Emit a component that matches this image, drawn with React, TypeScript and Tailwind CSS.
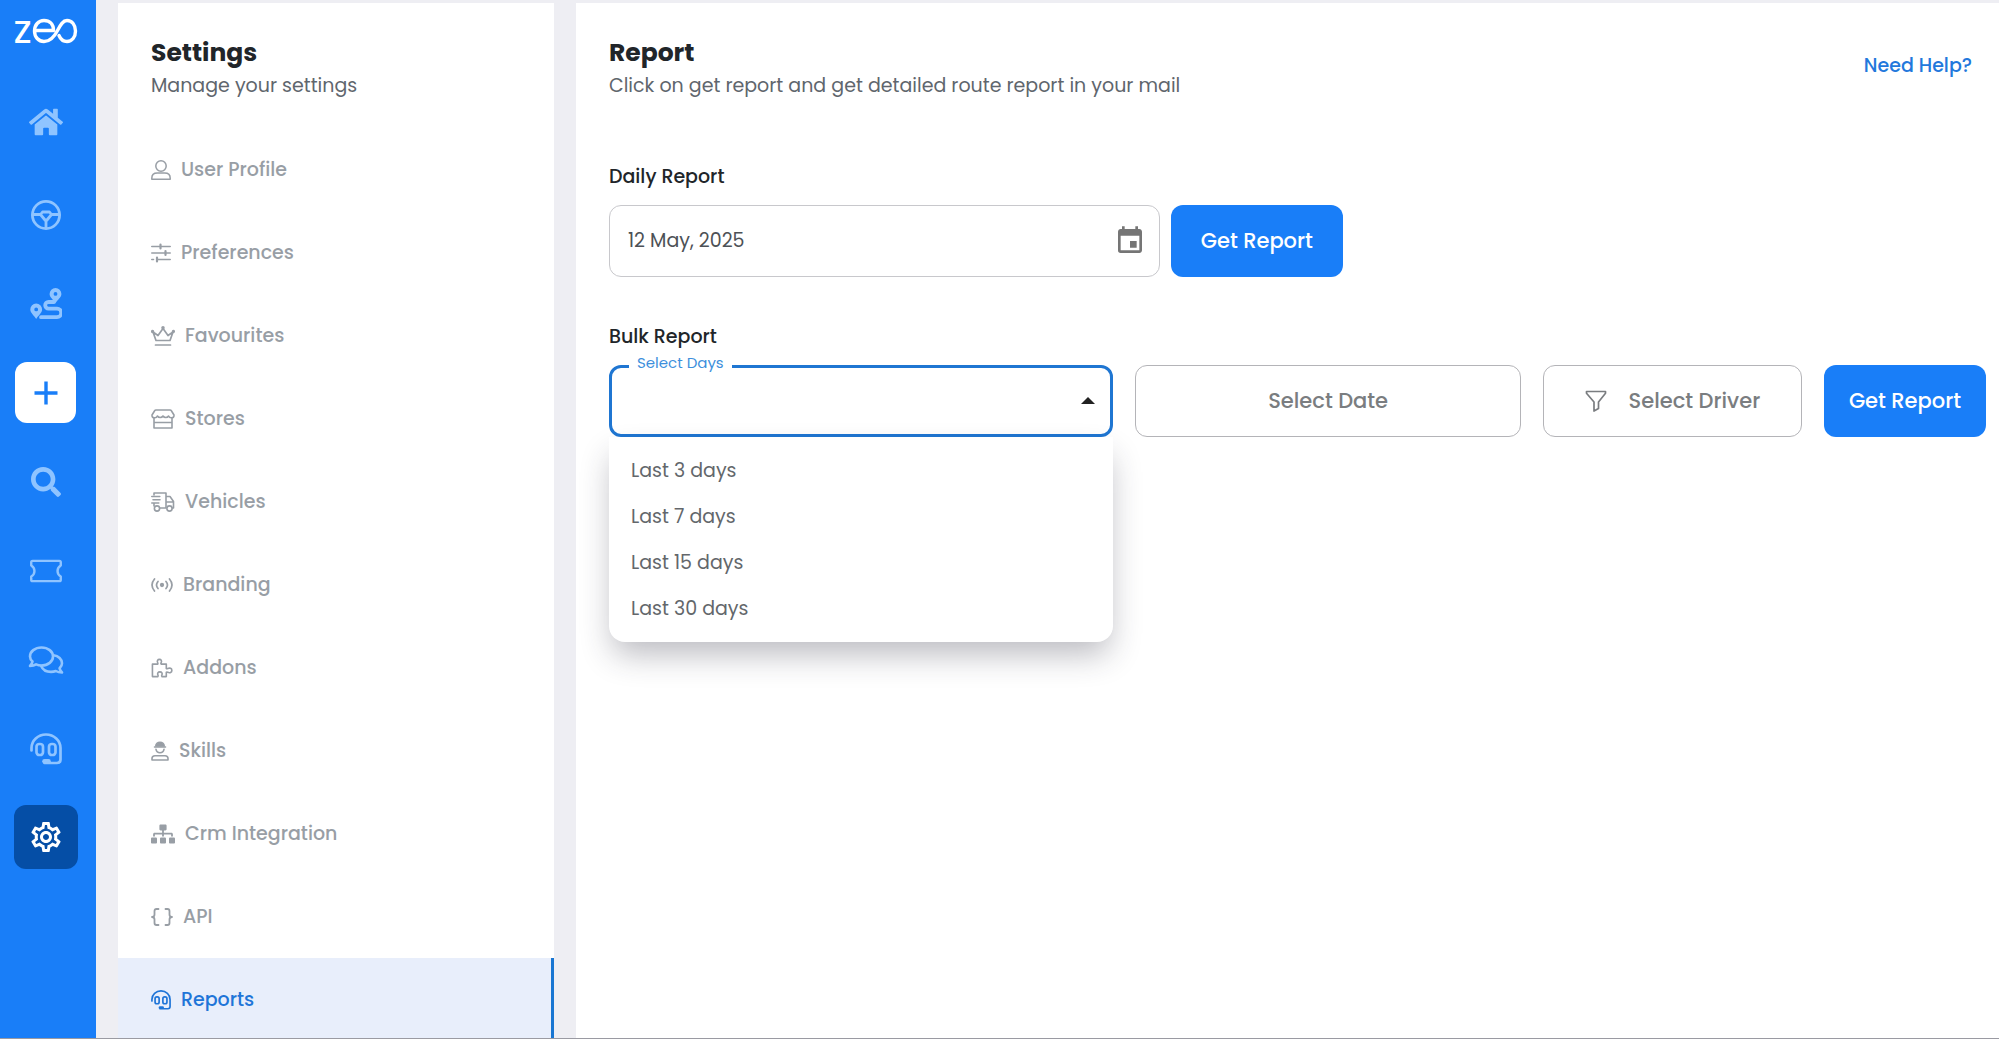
import React from "react";
import { FaHome, FaSearch, FaSitemap } from "react-icons/fa";
import { MdEvent, MdOutlineSettings } from "react-icons/md";

interface IconProps {
  className?: string;
}

const stroke = {
  fill: "none",
  stroke: "currentColor",
  strokeLinecap: "round" as const,
  strokeLinejoin: "round" as const,
};

const WheelIcon = ({ className }: IconProps) => (
  <svg viewBox="0 0 32 32" className={className} {...stroke} strokeWidth="2.8">
    <circle cx="16" cy="16" r="13.6" />
    <path d="M3 15.500h7.500M21.500 15.500H29M16 22v7M12.500 13h7l2 2.500-4.500 5.500h-2l-4.500-5.500z" />
  </svg>
);

const RouteIcon = ({ className }: IconProps) => (
  <svg viewBox="0 0 32 32" className={className}>
    <path
      d="M24 14h-5.500a3.300 3.300 0 0 0 0 6.600h8.500a4.200 4.200 0 0 1 0 8.600H11"
      {...stroke}
      strokeWidth="3.8"
    />
    <path
      fill="currentColor"
      fillRule="evenodd"
      d="M25.500 0a5.900 5.900 0 0 1 5.900 5.900c0 3.300-3.900 6-5.900 9-2-3-5.900-5.700-5.900-9A5.900 5.900 0 0 1 25.500 0zm0 4a1.900 1.900 0 1 0 0 3.800 1.900 1.900 0 0 0 0-3.800zM6.200 15.500a5.900 5.900 0 0 1 5.900 5.900C12.100 24.700 8.200 27.500 6.200 31c-2-3.500-5.900-6.300-5.900-9.600a5.900 5.900 0 0 1 5.900-5.900zm0 4a1.900 1.900 0 1 0 0 3.800 1.900 1.900 0 0 0 0-3.800z"
    />
  </svg>
);

const TicketIcon = ({ className }: IconProps) => (
  <svg viewBox="0 0 36 26" className={className} {...stroke} strokeWidth="2.6">
    <path d="M3.500 2h29q1.500 0 1.500 1.500v3.500q-3.500 2-3.500 6t3.500 6v3.500q0 1.500-1.500 1.500h-29Q2 24 2 22.500V19q3.500-2 3.500-6T2 7V3.500Q2 2 3.500 2z" />
  </svg>
);

const ChatIcon = ({ className }: IconProps) => (
  <svg viewBox="0 0 36 28" className={className} {...stroke} strokeWidth="2.6">
    <path d="M13.500 1.500c6.600 0 11.500 4 11.500 9s-4.900 9-11.500 9c-2 0-3.800-.4-5.400-1.100C6.500 19.500 4.500 20 2 20c1.500-1.600 2.300-3 2.500-4.500C2.800 14 2 12.400 2 10.500c0-5 4.900-9 11.500-9z" />
    <path d="M25.500 9.300c5 .7 8.500 4 8.500 8 0 1.900-.8 3.500-2.400 5 .2 1.400 1 2.700 2.400 4.200-2.500 0-4.500-.5-6.200-1.500-1.400.6-3 .9-4.800.9-4.500 0-8.300-2.200-9.800-5.900" />
  </svg>
);

const HeadsetIcon = ({ className }: IconProps) => (
  <svg viewBox="0 0 32 32" className={className} {...stroke} strokeWidth="2.7">
    <path d="M1.500 17.500V15C1.500 7.500 8 1.500 16 1.500S30.500 7.500 30.500 15v11.500q0 3.500-3.500 3.500H14.500" />
    <path d="M14.500 28.200h4" strokeWidth="4.600" />
    <rect x="6.500" y="11" width="6.500" height="11" rx="2.800" />
    <rect x="19" y="11" width="6.500" height="11" rx="2.800" />
  </svg>
);

const UserIcon = ({ className }: IconProps) => (
  <svg viewBox="0 0 20 20" className={className} {...stroke} strokeWidth="1.500">
    <circle cx="10" cy="6" r="5.200" />
    <path d="M6.300 13h7.400q5.500 0 5.500 5.200v1H.8v-1Q.8 13 6.300 13z" />
  </svg>
);

const SlidersIcon = ({ className }: IconProps) => (
  <svg viewBox="0 0 20 20" className={className} {...stroke} strokeWidth="1.600">
    <path d="M.8 3.500h18.400M.8 10h18.400M.8 16.500h1.700M6 16.500h13.200" />
    <path d="M9.500 1.500v4M14.500 8v4M6 14.500v4" strokeWidth="2.200" />
  </svg>
);

const CrownIcon = ({ className }: IconProps) => (
  <svg viewBox="0 0 24 20" className={className} {...stroke} strokeWidth="1.700">
    <path d="M4.500 19h15M5 14.500h14l3-8.500-5 3.500L12 2.500 7 9.500 2 6z" />
    <circle cx="12" cy="1.800" r=".9" fill="currentColor" />
    <circle cx="1.600" cy="5.500" r=".8" fill="currentColor" />
    <circle cx="22.400" cy="5.500" r=".8" fill="currentColor" />
  </svg>
);

const StoreIcon = ({ className }: IconProps) => (
  <svg viewBox="0 0 24 20" className={className} {...stroke} strokeWidth="1.600">
    <path d="M5 1h14q1 0 1.500 1L23 6q.2 2.800-2.500 2.800Q18.500 9 17.600 7q-.9 1.500-2.800 1.500T12 7q-.9 1.500-2.800 1.500T6.400 7Q5.500 9 3.500 8.800.8 8.800 1 6l2.500-4Q4 1 5 1z" />
    <path d="M3 9v10h18V9M3 13.500h18" />
  </svg>
);

const TruckIcon = ({ className }: IconProps) => (
  <svg viewBox="0 0 24 20" className={className} {...stroke} strokeWidth="1.600">
    <path d="M3 3V1h12v15H9M15 4.500h4l3.500 5V16h-1.300M15 10h7.500" />
    <path d="M.8 4.500h8M2 7.800h7M.8 11h7M3 11v3" />
    <circle cx="6" cy="16.500" r="2.600" />
    <circle cx="18.500" cy="16.500" r="2.600" />
  </svg>
);

const BroadcastIcon = ({ className }: IconProps) => (
  <svg viewBox="0 0 22 20" className={className} {...stroke} strokeWidth="1.700">
    <path d="M3.500 4q-5 6 0 12M7 6.500q-3 3.500 0 7M18.500 4q5 6 0 12M15 6.500q3 3.500 0 7" />
    <circle cx="11" cy="10" r="1.300" fill="currentColor" />
  </svg>
);

const PuzzleIcon = ({ className }: IconProps) => (
  <svg viewBox="0 0 23 20" className={className} {...stroke} strokeWidth="1.700">
    <path d="M1.500 6H7q.5-.4 0-1.500C6 2.500 7 1 8.800 1s2.800 1.500 1.800 3.500Q10 5.600 10.600 6H16v4.500q.4.500 1.500 0c2.200-1 4.300 0 4.300 2s-2.100 3-4.300 2q-1.100-.5-1.500 0V19h-4.500q-.7-.6-.2-1.500c1-1.800 0-3.500-2-3.500s-3 1.700-2 3.500q.5.900-.2 1.500H1.500z" />
  </svg>
);

const WorkerIcon = ({ className }: IconProps) => (
  <svg viewBox="0 0 18 20" className={className} {...stroke} strokeWidth="1.600">
    <path d="M4.800 5C4.800 3 6.500 1.200 9 1.200S13.200 3 13.200 5z" fill="currentColor" />
    <path d="M3.500 6h11M5 8.300c.4 2 2 3.400 4 3.400s3.600-1.400 4-3.400M1 19v-1.500Q1 14.800 4 14.800h10q3 0 3 2.700V19z" />
  </svg>
);

const BracesIcon = ({ className }: IconProps) => (
  <svg viewBox="0 0 22 20" className={className} {...stroke} strokeWidth="1.800">
    <path d="M7.500 2h-2q-2 0-2 2v3.500Q3.500 10 1 10q2.500 0 2.500 2.500V16q0 2 2 2h2M14.500 2h2q2 0 2 2v3.500Q18.500 10 21 10q-2.500 0-2.500 2.500V16q0 2-2 2h-2" />
  </svg>
);

const FunnelIcon = ({ className }: IconProps) => (
  <svg viewBox="0 0 22 22" className={className} {...stroke} strokeWidth="1.700">
    <path d="M1.500 1.500h19v1.800L13.500 12v6.500L9 21v-9L1.500 3.300z" />
  </svg>
);

const railItems = [
  { label: "Routes", icon: <WheelIcon className="size-8" /> },
  { label: "Stops", icon: <RouteIcon className="size-8" /> },
  { label: "Add", icon: null },
  { label: "Search", icon: <FaSearch className="size-[30px]" /> },
  { label: "Tickets", icon: <TicketIcon className="h-6 w-9" /> },
  { label: "Chat", icon: <ChatIcon className="h-7 w-9" /> },
  { label: "Support", icon: <HeadsetIcon className="size-8" /> },
];

const settingsItems = [
  { label: "User Profile", icon: <UserIcon className="size-5" /> },
  { label: "Preferences", icon: <SlidersIcon className="size-5" /> },
  { label: "Favourites", icon: <CrownIcon className="h-5 w-6" /> },
  { label: "Stores", icon: <StoreIcon className="h-5 w-6" /> },
  { label: "Vehicles", icon: <TruckIcon className="h-5 w-6" /> },
  { label: "Branding", icon: <BroadcastIcon className="h-5 w-[22px]" /> },
  { label: "Addons", icon: <PuzzleIcon className="h-5 w-[22px]" /> },
  { label: "Skills", icon: <WorkerIcon className="h-5 w-[18px]" /> },
  { label: "Crm Integration", icon: <FaSitemap className="h-5 w-6" /> },
  { label: "API", icon: <BracesIcon className="h-5 w-[22px]" /> },
  { label: "Reports", icon: <HeadsetIcon className="size-5" />, active: true },
];

const dayRanges = ["Last 3 days", "Last 7 days", "Last 15 days", "Last 30 days"];

function Rail() {
  return (
    <nav className="flex w-24 shrink-0 flex-col items-center bg-[#197ef8] pr-[5px] text-[#8fc4ff]">
      <a href="#" aria-label="zeo" className="flex h-[77px] items-start pt-[7px] text-white">
        <span className="text-[40px] leading-[44px]">z</span>
        <svg viewBox="0 0 46 26" className="mt-[11px] h-[26px] w-[46px]" {...stroke} strokeWidth="3.400">
          <path d="M3 12.500h18.500C21.500 6 17.500 2.500 12 2.500S2.500 7 2.500 13 6.500 23.500 12 23.500c6.500 0 10.500-5 13.500-11 3-6 5.500-10 9.500-10 5 0 8.500 4.500 8.500 10.500S40 23.500 35 23.500c-4 0-6.500-2.500-8-6" />
        </svg>
      </a>
      <a href="#" aria-label="Home" className="mb-1 flex h-[89px] items-center">
        <FaHome className="size-[34px]" />
      </a>
      {railItems.map((item) => (
        <div key={item.label} className="flex h-[89px] items-center">
          {item.icon ? (
            <a href="#" aria-label={item.label}>
              {item.icon}
            </a>
          ) : (
            <button
              aria-label={item.label}
              className="flex size-[61px] items-center justify-center rounded-xl bg-white text-[#197ef8]"
            >
              <svg viewBox="0 0 24 24" className="size-6" stroke="currentColor" strokeWidth="3.400">
                <path d="M12 .5v23M.5 12h23" />
              </svg>
            </button>
          )}
        </div>
      ))}
      <div className="flex h-[87px] items-center">
        <a
          href="#"
          aria-label="Settings"
          className="flex size-16 items-center justify-center rounded-xl bg-[#054ea6] text-white"
        >
          <MdOutlineSettings className="size-9" />
        </a>
      </div>
    </nav>
  );
}

function SettingsMenu() {
  return (
    <aside className="mt-[3px] w-[436px] shrink-0 overflow-hidden bg-white">
      <header className="h-[125px] px-[33px] pt-8">
        <h2 className="text-[25px] leading-9 font-bold text-[#212529]">Settings</h2>
        <p className="text-[19px] leading-[30px] text-[#5f666d]">Manage your settings</p>
      </header>
      <ul>
        {settingsItems.map((item) => (
          <li key={item.label}>
            <a
              href="#"
              className={
                item.active
                  ? "flex h-[83px] items-center gap-[10px] border-r-[3px] border-[#1976d2] bg-[#e8eefb] px-[33px] text-[19px] leading-[30px] font-medium text-[#1f75d8]"
                  : "flex h-[83px] items-center gap-[10px] px-[33px] text-[19px] leading-[30px] font-medium text-[#989ea5]"
              }
            >
              {item.icon}
              {item.label}
            </a>
          </li>
        ))}
      </ul>
    </aside>
  );
}

function DaysSelect() {
  const [open, setOpen] = React.useState(true);
  const [days, setDays] = React.useState("");

  return (
    <div className="relative">
      <label
        htmlFor="days"
        className="absolute -top-3 left-5 bg-white px-2 text-[15px] leading-5 text-[#3d8fdc]"
      >
        Select Days
      </label>
      <select
        id="days"
        value={days}
        onChange={(e) => setDays(e.target.value)}
        onMouseDown={(e) => {
          e.preventDefault();
          setOpen(!open);
        }}
        className="h-[72px] w-full appearance-none rounded-xl border-[3px] border-[#1f76d2] bg-white px-5 text-[19px] text-[#5f6368] outline-none"
      >
        <option value="" />
        {dayRanges.map((range) => (
          <option key={range}>{range}</option>
        ))}
      </select>
      <svg viewBox="0 0 14 7" className="pointer-events-none absolute top-8 right-[18px] h-[7px] w-[14px]">
        <path d="M0 7 7 0l7 7z" fill="#222" />
      </svg>
      {open && (
        <ul
          role="listbox"
          aria-label="Select Days"
          className="absolute top-full left-0 w-full rounded-b-2xl bg-white pt-[11px] pb-[10px] shadow-[0_16px_32px_-4px_rgba(40,40,60,0.32)]"
        >
          {dayRanges.map((range) => (
            <li
              key={range}
              role="option"
              aria-selected={days === range}
              onClick={() => {
                setDays(range);
                setOpen(false);
              }}
              className="cursor-pointer px-[22px] text-[19px] leading-[46px] text-[#63676b]"
            >
              {range}
            </li>
          ))}
        </ul>
      )}
    </div>
  );
}

export default function App() {
  return (
    <div className="flex h-screen overflow-hidden border-b border-[#9a9aa2] bg-[#eeeef3] font-[Poppins,Inter,sans-serif]">
      <Rail />
      <div className="flex min-w-0 flex-1 gap-[22px] pl-[22px]">
        <SettingsMenu />
        <main className="mt-[3px] min-w-0 flex-1 bg-white pt-8 pr-[13px] pl-[33px]">
          <header className="flex items-start justify-between pr-[14px]">
            <div>
              <h1 className="text-[25px] leading-9 font-bold text-[#212529]">Report</h1>
              <p className="text-[19px] leading-[30px] text-[#5f666d]">
                Click on get report and get detailed route report in your mail
              </p>
            </div>
            <a href="#" className="pt-4 text-[19px] leading-[30px] font-medium text-[#2278dc]">
              Need Help?
            </a>
          </header>

          <section className="mt-[61px]">
            <label htmlFor="daily" className="block text-[19px] leading-[30px] font-medium text-[#212529]">
              Daily Report
            </label>
            <div className="mt-[13px] flex gap-[11px]">
              <div className="flex h-[72px] w-2/5 items-center rounded-xl border border-[#c8c8cc] pr-[13px] pl-[18px]">
                <input
                  id="daily"
                  type="text"
                  defaultValue="12 May, 2025"
                  className="min-w-0 flex-1 text-[19px] text-[#4d5156] outline-none"
                />
                <button aria-label="Choose date" className="text-[#757575]">
                  <MdEvent className="size-8" />
                </button>
              </div>
              <button className="h-[72px] w-[172px] rounded-xl bg-[#197ef8] text-[21px] font-medium text-white">
                Get Report
              </button>
            </div>
          </section>

          <section className="mt-[45px]">
            <h2 className="text-[19px] leading-[30px] font-medium text-[#212529]">Bulk Report</h2>
            <div className="mt-[13px] grid grid-cols-[504fr_385fr_259fr_162px] gap-[22px]">
              <DaysSelect />
              <button className="h-[72px] rounded-xl border border-[#b4b4b8] text-[21px] font-medium text-[#7a7d80]">
                Select Date
              </button>
              <button className="flex h-[72px] items-center justify-center gap-[22px] rounded-xl border border-[#b4b4b8] text-[21px] font-medium text-[#7a7d80]">
                <FunnelIcon className="size-[22px]" />
                Select Driver
              </button>
              <button className="h-[72px] rounded-xl bg-[#197ef8] text-[21px] font-medium text-white">
                Get Report
              </button>
            </div>
          </section>
        </main>
      </div>
    </div>
  );
}
